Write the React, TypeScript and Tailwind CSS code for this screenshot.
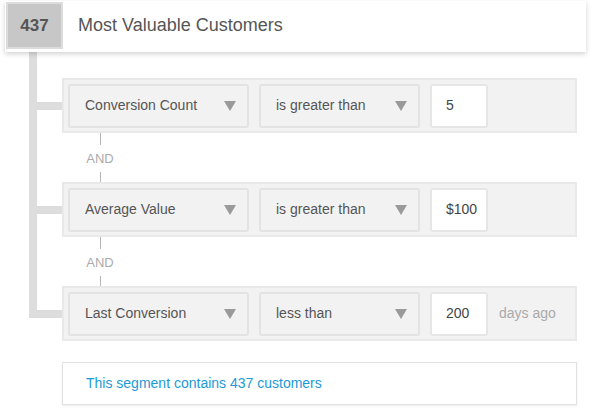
import React from "react";

type Rule = {
  field: string;
  op: string;
  value: string;
  suffix?: string;
};

const rules: Rule[] = [
  { field: "Conversion Count", op: "is greater than", value: "5" },
  { field: "Average Value", op: "is greater than", value: "$100" },
  { field: "Last Conversion", op: "less than", value: "200", suffix: "days ago" },
];

function Caret() {
  return (
    <svg width="12" height="10" viewBox="0 0 12 10" className="shrink-0">
      <path d="M0 0 H12 L6 10 Z" fill="#9a9a9a" />
    </svg>
  );
}

function Select({ label, width }: { label: string; width: string }) {
  return (
    <div
      className={`${width} h-[44px] flex items-center justify-between pl-[15px] pr-[11px] bg-[#f2f2f2] border-2 border-[#e3e3e3] rounded-[3px] text-[14px] text-[#555]`}
    >
      <span>{label}</span>
      <Caret />
    </div>
  );
}

// left gutter piece of the tree connector
function Trunk({ className = "" }: { className?: string }) {
  return (
    <div className={`w-[62px] shrink-0 flex ${className}`}>
      <div className="ml-[29px] w-[8px] bg-[#dddddd]" />
    </div>
  );
}

function Branch({ last }: { last: boolean }) {
  return (
    <div className="w-[62px] shrink-0 flex flex-col">
      <div className="flex-1 flex">
        <div className="ml-[29px] w-[8px] bg-[#dddddd]" />
      </div>
      <div className="h-[8px] ml-[29px] bg-[#dddddd]" />
      <div className="flex-1 flex">
        {!last && <div className="ml-[29px] w-[8px] bg-[#dddddd]" />}
      </div>
    </div>
  );
}

function AndJoin() {
  return (
    <div className="flex h-[49px]">
      <Trunk />
      <div className="w-[76px] flex flex-col items-center">
        <div className="w-px h-[12px] bg-[#b5b5b5]" />
        <div className="flex-1 flex items-center text-[13px] text-[#aaa]">AND</div>
        <div className="w-px h-[10px] bg-[#b5b5b5]" />
      </div>
    </div>
  );
}

function RuleRow({ rule, last }: { rule: Rule; last: boolean }) {
  return (
    <div className="flex h-[55px]">
      <Branch last={last} />
      <div className="w-[515px] border-2 border-[#e9e9e9] bg-[#f2f2f2] flex items-center gap-[10px] px-[4px]">
        <Select label={rule.field} width="w-[181px]" />
        <Select label={rule.op} width="w-[161px]" />
        <div className="w-[58px] h-[44px] bg-white border-2 border-[#e6e6e6] rounded-[3px] flex items-center pl-[14px] text-[14px] text-[#444]">
          {rule.value}
        </div>
        {rule.suffix && (
          <span className="ml-[1px] text-[14px] text-[#aaa]">{rule.suffix}</span>
        )}
      </div>
    </div>
  );
}

export default function App() {
  return (
    <div className="w-[592px] h-[410px] bg-white overflow-hidden font-['Liberation_Sans',Arial,sans-serif]">
      {/* Segment header */}
      <div className="pt-[1px] pl-[5px]">
        <div className="relative z-10 w-[581px] h-[51px] bg-white flex items-start p-[1px] shadow-[0_2px_5px_rgba(0,0,0,0.18)]">
          <div className="w-[57px] h-[47px] border-2 border-[#dcdcdc] bg-[#c7c7c7] flex items-center justify-center text-[17px] font-bold text-[#555]">
            437
          </div>
          <div className="h-[47px] flex items-center pl-[15px] text-[18px] text-[#555]">
            Most Valuable Customers
          </div>
        </div>
      </div>

      <div className="flex h-[26px]">
        <Trunk />
      </div>

      {rules.map((r, i) => (
        <React.Fragment key={r.field}>
          {i > 0 && <AndJoin />}
          <RuleRow rule={r} last={i === rules.length - 1} />
        </React.Fragment>
      ))}

      {/* Summary */}
      <div className="pl-[62px] pt-[21px]">
        <div className="w-[515px] h-[43px] border border-[#e2e2e2] bg-white flex items-center pl-[23px] text-[14px] text-[#1c9ad6] shadow-[0_1px_2px_rgba(0,0,0,0.08)]">
          This segment contains 437 customers
        </div>
      </div>
    </div>
  );
}
